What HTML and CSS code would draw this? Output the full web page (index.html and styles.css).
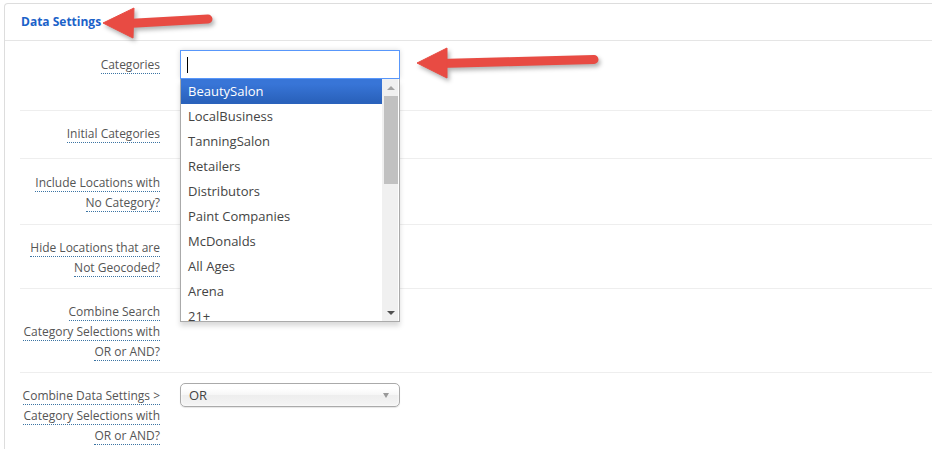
FILE: index.html
```html
<!DOCTYPE html>
<html lang="en">
  <head>
    <meta charset="UTF-8" />
    <meta name="viewport" content="width=device-width, initial-scale=1.0" />
    <title>Data Settings</title>
    <link rel="stylesheet" href="styles.css">
  </head>
  <body>
    <div class="panel">
      <div class="panel-header">Data Settings</div>

      <div class="panel-body">
        <!-- Categories (chosen style, open) -->
        <div class="row row-first">
          <div class="label"><span>Categories</span></div>
          <div class="field field-tall">
            <div class="search-box"><span class="caret"></span></div>
            <div class="drop">
              <ul class="results">
                <li class="active">BeautySalon</li>
                <li>LocalBusiness</li>
                <li>TanningSalon</li>
                <li>Retailers</li>
                <li>Distributors</li>
                <li>Paint Companies</li>
                <li>McDonalds</li>
                <li>All Ages</li>
                <li>Arena</li>
                <li>21+</li>
                <li>Bar</li>
              </ul>
              <div class="scrollbar">
                <div class="sb-btn"><span class="tri-up"></span></div>
                <div class="sb-thumb"></div>
                <div class="sb-track"></div>
                <div class="sb-btn"><span class="tri-down"></span></div>
              </div>
            </div>
          </div>
        </div>

        <div class="row">
          <div class="label"><span>Initial Categories</span></div>
          <div class="field field-min"></div>
        </div>

        <div class="row row-loose">
          <div class="label"><span>Include Locations with</span><br><span>No Category?</span></div>
          <div class="field"></div>
        </div>

        <div class="row">
          <div class="label"><span>Hide Locations that are</span><br><span>Not Geocoded?</span></div>
          <div class="field"></div>
        </div>

        <div class="row">
          <div class="label"><span>Combine Search</span><br><span>Category Selections with</span><br><span>OR or AND?</span></div>
          <div class="field"></div>
        </div>

        <div class="row">
          <div class="label"><span>Combine Data Settings &gt;</span><br><span>Category Selections with</span><br><span>OR or AND?</span></div>
          <div class="field">
            <div class="select">
              <span>OR</span>
              <span class="select-arrow"></span>
            </div>
          </div>
        </div>
      </div>
    </div>

    <!-- annotation arrows -->
    <svg class="marks" width="932" height="449" viewBox="0 0 932 449">
      <g class="arrow">
        <line x1="128" y1="23.5" x2="208" y2="19" />
        <polygon points="103,23 134,8 133,38" />
      </g>
      <g class="arrow">
        <line x1="440" y1="63.5" x2="594" y2="59.5" />
        <polygon points="417,63 447,48 447,78" />
      </g>
    </svg>
  </body>
</html>
```

FILE: styles.css
```css
body {
  margin: 0;
  padding: 3px 0 0 4px;
  font-family: "Open Sans", "Noto Sans", sans-serif;
  font-size: 13px;
  color: #555;
  background: #fff;
  overflow: hidden;
  position: relative;
  height: 446px;
}
.panel {
  border: 1px solid #ddd;
  border-bottom: none;
  border-radius: 4px 4px 0 0;
  margin-right: -20px;
  height: 100%;
}
.panel-header {
  height: 36px;
  line-height: 36px;
  padding: 0 16px;
  border-bottom: 1px solid #e5e5e5;
  font-size: 12px;
  font-weight: bold;
  color: #1b62c9;
}
.panel-body {
  padding-left: 15px;
}
.row {
  display: flex;
  border-top: 1px solid #eee;
  padding: 10px 0;
}
.row-first {
  border-top: none;
  padding-top: 9px;
}
.row-loose {
  padding-bottom: 11px;
}
.label {
  width: 140px;
  text-align: right;
  white-space: nowrap;
  font-size: 12px;
  line-height: 20px;
  padding-top: 3px;
}
.row-first .label {
  padding-top: 5px;
}
.row-loose .label {
  padding-top: 4px;
}
.label span {
  border-bottom: 1px dotted #3b74a3;
}
.field {
  width: 220px;
  margin-left: 20px;
  position: relative;
}
.field-tall {
  height: 50px;
}
.field-min {
  min-height: 27px;
}

/* chosen style search box */
.search-box {
  box-sizing: border-box;
  height: 29px;
  border: 1px solid #5897fb;
  background: #fff;
  box-shadow: 0 0 5px rgba(0, 0, 0, 0.15);
  padding: 6px 0 0 6px;
}
.caret {
  display: block;
  width: 0;
  height: 16px;
  border-left: 1px solid #000;
}
.drop {
  position: absolute;
  top: 29px;
  left: 0;
  z-index: 2;
  box-sizing: border-box;
  width: 220px;
  height: 243px;
  border: 1px solid #aaa;
  border-top: none;
  background: #fff;
  box-shadow: 0 4px 5px rgba(0, 0, 0, 0.15);
  display: flex;
}
.results {
  list-style: none;
  margin: 0;
  padding: 0;
  width: 201px;
  overflow: hidden;
}
.results li {
  height: 25px;
  line-height: 25px;
  padding: 0 7px;
  color: #444;
}
.results li.active {
  background: linear-gradient(#3875d7 20%, #2a62bc 90%);
  color: #fff;
}
.scrollbar {
  width: 16px;
  margin-right: 1px;
  background: #f0f0f0;
  display: flex;
  flex-direction: column;
}
.sb-btn {
  height: 17px;
  display: flex;
  justify-content: center;
  align-items: center;
}
.sb-thumb {
  height: 88px;
  margin-left: 2px;
  background: #c1c1c1;
}
.sb-track {
  flex: 1;
}
.tri-up {
  border-left: 4px solid transparent;
  border-right: 4px solid transparent;
  border-bottom: 4px solid #a3a3a3;
  margin-left: 2px;
}
.tri-down {
  border-left: 4px solid transparent;
  border-right: 4px solid transparent;
  border-top: 4px solid #505050;
  margin-left: 2px;
}

/* single select */
.select {
  box-sizing: border-box;
  height: 24px;
  border: 1px solid #aaa;
  border-radius: 5px;
  background: linear-gradient(#fff 20%, #f6f6f6 50%, #eee 52%, #f4f4f4 100%);
  box-shadow: 0 0 3px #fff inset, 0 1px 1px rgba(0, 0, 0, 0.1);
  padding: 0 8px;
  line-height: 22px;
  color: #444;
  display: flex;
  justify-content: space-between;
  align-items: center;
}
.select-arrow {
  border-left: 3.5px solid transparent;
  border-right: 3.5px solid transparent;
  border-top: 5px solid #999;
  margin-right: 2px;
}

/* annotation overlay */
.marks {
  position: absolute;
  left: 0;
  top: 0;
  pointer-events: none;
  z-index: 5;
}
.arrow {
  filter: drop-shadow(2px 3px 2px rgba(0, 0, 0, 0.3));
}
.arrow line {
  stroke: #e84b43;
  stroke-width: 9;
  stroke-linecap: round;
}
.arrow polygon {
  fill: #e84b43;
  stroke: #e84b43;
  stroke-width: 1;
  stroke-linejoin: round;
}
```
